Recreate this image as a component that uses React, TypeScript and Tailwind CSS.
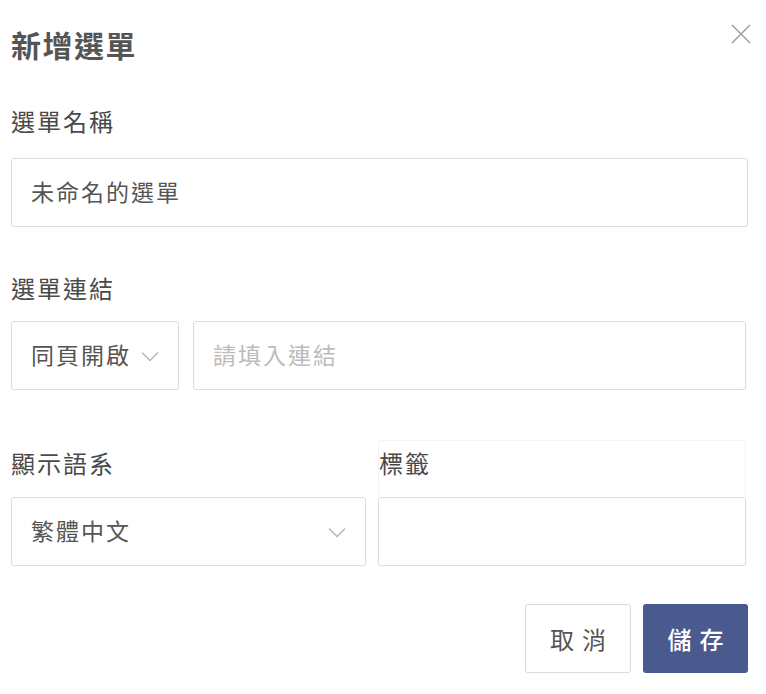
import { useState } from 'react';

// 新增選單 dialog

const FONT = {
  fontFamily: '"Noto Sans CJK TC", "Noto Sans CJK SC", "Noto Sans", sans-serif',
};

function Chevron({ className = '' }: { className?: string }) {
  return (
    <svg width="18" height="11" viewBox="0 0 18 11" className={className} fill="none">
      <polyline points="1,1.5 9,9.5 17,1.5" stroke="#b5b5b5" strokeWidth="1.3" />
    </svg>
  );
}

function FieldLabel({ children }: { children: React.ReactNode }) {
  return (
    <div className="flex h-[34px] items-center text-[24px] tracking-[2px] text-[#4a4a4a]">
      {children}
    </div>
  );
}

export default function App() {
  const [name, setName] = useState('未命名的選單');
  const [link, setLink] = useState('');
  const [tag, setTag] = useState('');

  return (
    <div className="min-h-[694px] w-[766px] bg-white pl-[11px] pt-[28px]" style={FONT}>
      <div className="w-[737px]">
        {/* header */}
        <div className="flex h-[32px] items-center justify-between">
          <h1 className="text-[30px] font-bold tracking-[1.5px] text-[#555]">新增選單</h1>
          <button type="button" className="-mt-[4px] mr-[-4px] self-start">
            <svg width="22" height="20" viewBox="0 0 22 20" fill="none">
              <path d="M2 1 L20 19 M20 1 L2 19" stroke="#9a9a9a" strokeWidth="1.4" />
            </svg>
          </button>
        </div>

        <div className="mt-[44px] mb-[20px]">
          <FieldLabel>選單名稱</FieldLabel>
        </div>
        <input
          value={name}
          onChange={(e) => setName(e.target.value)}
          className="block h-[69px] w-full rounded-[3px] border border-[#dcdcdc] px-[19px] pb-[4px] text-[23px] tracking-[2px] text-[#555] outline-none"
        />

        <div className="mt-[44px] mb-[16px]">
          <FieldLabel>選單連結</FieldLabel>
        </div>
        <div className="flex h-[69px] gap-[14px]">
          <div className="flex w-[168px] items-center justify-between rounded-[3px] border border-[#dcdcdc] pb-[3px] pl-[19px] pr-[19px]">
            <span className="text-[23px] tracking-[2px] text-[#555]">同頁開啟</span>
            <Chevron className="mt-[4px]" />
          </div>
          <input
            value={link}
            onChange={(e) => setLink(e.target.value)}
            placeholder="請填入連結"
            className="h-full w-[553px] rounded-[3px] border border-[#dcdcdc] px-[19px] pb-[3px] text-[23px] tracking-[2px] text-[#555] outline-none placeholder:text-[#bcbcbc]"
          />
        </div>

        <div className="mt-[50px] flex gap-[12px]">
          <div className="w-[355px]">
            <div className="h-[57px] pt-[6px]">
              <FieldLabel>顯示語系</FieldLabel>
            </div>
            <div className="flex h-[69px] items-center justify-between rounded-[3px] border border-[#dcdcdc] pb-[3px] pl-[19px] pr-[19px]">
              <span className="text-[23px] tracking-[2px] text-[#555]">繁體中文</span>
              <Chevron className="mt-[4px]" />
            </div>
          </div>
          <div className="w-[368px]">
            <div className="h-[57px] rounded-t-[3px] border border-b-0 border-[#f4f4f4] pt-[5px]">
              <FieldLabel>標籤</FieldLabel>
            </div>
            <input
              value={tag}
              onChange={(e) => setTag(e.target.value)}
              className="block h-[69px] w-full rounded-[3px] border border-[#dcdcdc] px-[19px] text-[23px] text-[#555] outline-none"
            />
          </div>
        </div>

        <div className="mt-[38px] flex justify-end gap-[12px]">
          <button
            type="button"
            className="h-[69px] w-[106px] rounded-[3px] border border-[#dcdcdc] bg-white text-[24px] text-[#555]"
          >
            <span className="mr-[-0.34em] tracking-[0.34em]">取消</span>
          </button>
          <button
            type="button"
            className="h-[69px] w-[105px] rounded-[3px] bg-[#4b5a8e] text-[24px] font-medium text-white"
          >
            <span className="mr-[-0.34em] tracking-[0.34em]">儲存</span>
          </button>
        </div>
      </div>
    </div>
  );
}
